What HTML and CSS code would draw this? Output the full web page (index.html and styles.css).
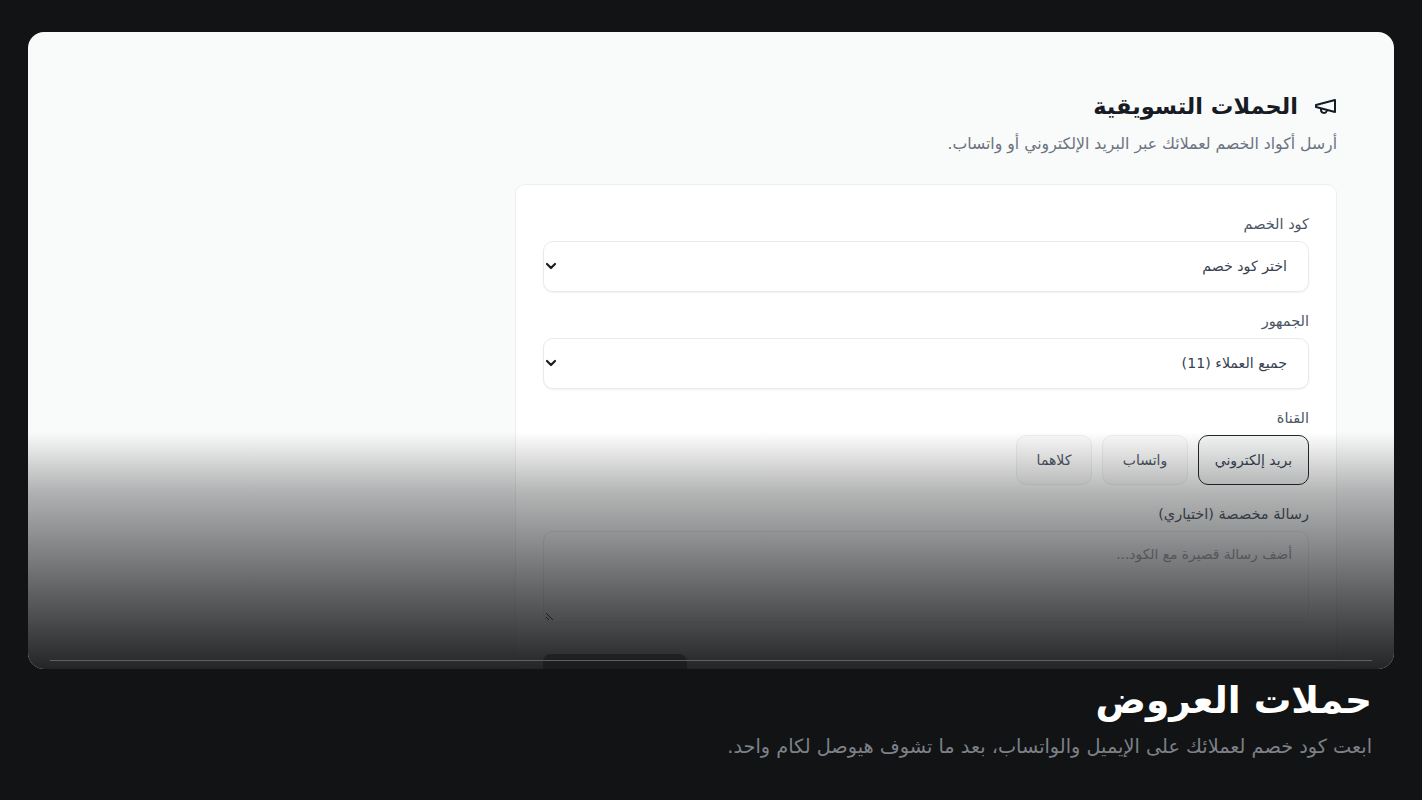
FILE: index.html
```html
<!DOCTYPE html>
<html lang="ar" dir="rtl">
<head>
<meta charset="utf-8">
<title>حملات العروض</title>
<link rel="stylesheet" href="styles.css">
</head>
<body>
<main class="stage">
  <section class="shot">
    <div class="page">
      <h1 class="title">
        <svg class="icon" viewBox="0 0 24 24" fill="none" stroke="currentColor" stroke-width="2" stroke-linecap="round" stroke-linejoin="round"><path d="M22 6 3 11v2l19 5z"/><path d="M8 15v1a3 3 0 0 0 5.8 1"/></svg>
        <span>الحملات التسويقية</span>
      </h1>
      <p class="lead">أرسل أكواد الخصم لعملائك عبر البريد الإلكتروني أو واتساب.</p>
      <form class="card">
        <div class="field">
          <label class="label">كود الخصم</label>
          <div class="select"><span>اختر كود خصم</span><svg class="chev" viewBox="0 0 12 12" fill="none" stroke="currentColor" stroke-width="2.2" stroke-linecap="round" stroke-linejoin="round"><path d="M2 4l4 4 4-4"/></svg></div>
        </div>
        <div class="field">
          <label class="label">الجمهور</label>
          <div class="select"><span>جميع العملاء (11)</span><svg class="chev" viewBox="0 0 12 12" fill="none" stroke="currentColor" stroke-width="2.2" stroke-linecap="round" stroke-linejoin="round"><path d="M2 4l4 4 4-4"/></svg></div>
        </div>
        <div class="field">
          <label class="label">القناة</label>
          <div class="channels">
            <button type="button" class="chip chip-email active">بريد إلكتروني</button>
            <button type="button" class="chip chip-whatsapp">واتساب</button>
            <button type="button" class="chip chip-both">كلاهما</button>
          </div>
        </div>
        <div class="field">
          <label class="label">رسالة مخصصة (اختياري)</label>
          <div class="textarea">أضف رسالة قصيرة مع الكود...<svg class="grip" viewBox="0 0 10 10" fill="none" stroke="currentColor" stroke-width="1"><path d="M1 2l7 7M1 6l3 3"/></svg></div>
        </div>
        <div class="submit-row"><div class="submit"></div></div>
      </form>
    </div>
    <div class="fade"></div>
    <div class="rule"></div>
  </section>
  <footer class="caption">
    <h2 class="cap-title">حملات العروض</h2>
    <p class="cap-text">ابعت كود خصم لعملائك على الإيميل والواتساب، بعد ما تشوف هيوصل لكام واحد.</p>
  </footer>
</main>
</body>
</html>
```
FILE: styles.css
```css
* { box-sizing: border-box; }
html, body { margin: 0; height: 100%; }
body {
  background: #111315;
  color: #14181f;
  font-family: "DejaVu Sans", "Noto Sans", sans-serif;
  overflow: hidden;
}
.stage { width: 1422px; height: 800px; padding: 32px 28px 0; }
.shot {
  position: relative;
  height: 637px;
  background: #f9fafa;
  border-radius: 16px;
  overflow: hidden;
  padding: 56px 57px 0;
}
.page { display: flex; flex-direction: column; }
.title {
  display: flex;
  align-items: center;
  gap: 15px;
  margin: 0;
  height: 36px;
  font-size: 22.5px;
  font-weight: 700;
  color: #161b24;
}
.icon { width: 24px; height: 24px; }
.lead { margin: 8px 0 0; height: 24px; font-size: 15.7px; line-height: 24px; color: #6b7280; }
.card {
  margin-top: 28px;
  width: 822px;
  padding: 29px 27px 0;
  background: #fff;
  border: 1px solid #eceef0;
  border-radius: 10px;
  height: 520px;
}
.field { margin-bottom: 19px; }
.label { display: block; height: 20px; margin-bottom: 7px; font-size: 14.5px; line-height: 20px; color: #4b5563; }
.select {
  display: flex;
  justify-content: space-between;
  align-items: center;
  height: 51px;
  padding: 0 21px 2px 1px;
  background: #fff;
  border: 1px solid #e8eaed;
  border-radius: 10px;
  box-shadow: 0 1px 2px rgba(0,0,0,.06);
  font-size: 14.2px;
  color: #374151;
}
.chev { width: 12px; height: 12px; color: #1a1d22; }
.channels { display: flex; gap: 10px; height: 50px; }
.chip {
  height: 50px;
  padding: 0;
  background: #fafafa;
  border: 1px solid #eceef0;
  border-radius: 10px;
  font: 14px "DejaVu Sans", sans-serif;
  color: #4b5563;
}
.chip-email { width: 111px; }
.chip-whatsapp { width: 86px; }
.chip-both { width: 76px; }
.chip.active { border: 1.5px solid #23272e; background: #f4f5f5; color: #374151; }
.textarea {
  position: relative;
  height: 92px;
  padding: 14px 16px;
  background: #fff;
  border: 1px solid #eceef0;
  border-radius: 10px;
  font-size: 13.8px;
  color: #a0a5ad;
}
.grip { position: absolute; left: 1px; bottom: 1px; width: 10px; height: 10px; color: #333; }
.submit-row { display: flex; justify-content: flex-end; margin-top: 31px; }
.submit { width: 144px; height: 44px; background: #7d8084; border-radius: 8px; }
.fade {
  position: absolute;
  inset: 400px 0 0;
  background: linear-gradient(to bottom, rgba(17,19,21,0) 0%, rgba(17,19,21,.31) 25%, rgba(17,19,21,.66) 67%, rgba(17,19,21,.92) 100%);
}
.rule {
  position: absolute;
  left: 22px;
  right: 22px;
  bottom: 8px;
  height: 1px;
  background: #5f6062;
}
.caption { padding: 9px 22px 0; }
.cap-title { margin: 0; height: 44px; font-size: 37.5px; line-height: 44px; font-weight: 700; color: #fff; }
.cap-text { margin: 11px 0 0; font-size: 19.3px; line-height: 28px; color: #7d8187; }
```
